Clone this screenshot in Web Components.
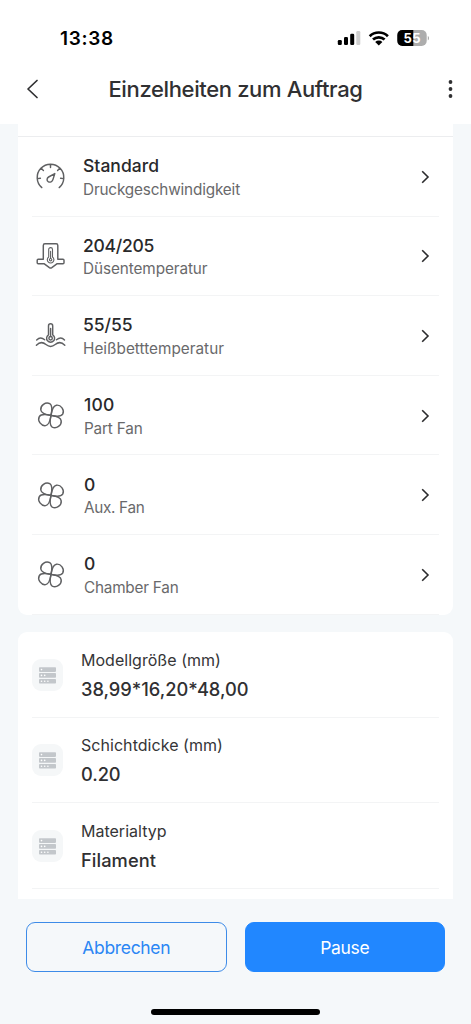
<!DOCTYPE html>
<html lang="de">
<head>
<meta charset="utf-8">
<title>Einzelheiten zum Auftrag</title>
<style>
html,body{margin:0;height:100%;overflow:hidden}
body{font-family:Inter,"Liberation Sans",sans-serif;background:#f5f8fa;color:#2d2d2f}
</style>
</head>
<body>
<job-screen></job-screen>
<script>
const define = (name, html, setup) => customElements.define(name, class extends HTMLElement {
  connectedCallback() {
    if (this.shadowRoot) return;
    this.attachShadow({mode: 'open'}).innerHTML = html;
    if (setup) setup(this, this.shadowRoot);
  }
});

/* A single line of text whose tracking adapts to the width given in "w". */
define('fit-line', `<style>:host{display:block;white-space:pre;line-height:1.2;font-feature-settings:"calt" 0}span{display:inline-block}</style><span><slot></slot></span>`, (el, root) => {
  const w = parseFloat(el.getAttribute('w'));
  if (!w) return;
  const span = root.querySelector('span');
  const gap = (w - span.getBoundingClientRect().width) / el.textContent.length;
  span.style.letterSpacing = gap.toFixed(3) + 'px';
});

const blade = 'M0 0C.8-3.6 1.8-9.8-1.2-11.7C-5.5-13.9-10.8-9.8-10.2-5.4C-9.5-1.2-3.6-.6 0 0Z';
const icons = {
  speed: `<path d="M6.8 27.6A13.3 13.3 0 1 1 24.2 27.6M15.5 4.3V7.6M6.1 8.1L8.4 10.4M24.9 8.1L22.6 10.4M2.3 18.6L5.4 18.3M28.7 18.6L25.6 18.3"/><path d="M19.8 13.6L18 19.4C17.4 21.6 15 22.8 13.2 21.7C11.5 20.6 11.8 18 13.6 17Z"/>`,
  nozzle: `<path d="M8.3 19.3V5.4Q8.3 3.8 9.9 3.8H21.2Q22.8 3.8 22.8 5.4V19.3H28Q29 19.3 29 20.3V22.7Q29 23.7 28 23.7H22.2L16.8 27.6Q15.6 28.4 14.4 27.6L9 23.7H3.2Q2.2 23.7 2.2 22.7V20.3Q2.2 19.3 3.2 19.3Z"/><path stroke-width="1.1" d="M13.7 17V9.5a1.9 1.9 0 0 1 3.8 0V17a3.3 3.3 0 1 1-3.8 0ZM15.6 11.2V18.4"/><circle stroke-width="1.1" cx="15.6" cy="19.7" r="1.2"/>`,
  bed: `<path d="M13.5 15.8V6.9a2.1 2.1 0 0 1 4.2 0V15.8a4 4 0 1 1-4.2 0ZM15.6 9.5V17.4"/><circle cx="15.6" cy="19.2" r="1.7"/><path d="M1.7 20.9C4.3 18.3 7.1 18.6 9.7 20.7M21.5 20.7C24.1 18.6 27 18.3 29.5 20.9M1.4 26.3C4.7 22.8 8 23 11 25.5C14 28 17.2 28 20.2 25.5C23.2 23 26.5 22.8 29.8 26.3"/>`,
  fan: `<g transform="translate(16 16.4)">${[0,90,180,270].map(a => `<path transform="rotate(${a})" d="${blade}"/>`).join('')}</g>`
};
define('line-icon', `<style>:host{display:block;width:32px;height:32px;flex:none}svg{display:block;fill:none;stroke:#5f6062;stroke-width:1.45;stroke-linecap:round;stroke-linejoin:round}</style><svg width="32" height="32"></svg>`,
  (el, root) => root.querySelector('svg').innerHTML = icons[el.getAttribute('name')]);

define('status-bar', `<style>
:host{display:flex;justify-content:space-between;align-items:center;height:28px;padding:24px 42px 0 60px;color:#000;font-size:19px;font-weight:600}
fit-line{margin-top:2px}svg{display:block}</style>
<fit-line w="54">13:38</fit-line>
<svg width="92" height="20" viewBox="0 0 92 20">
<rect y="12" x="0.8" width="4" height="5" rx="1.2"/><rect x="7" y="9" width="4" height="8" rx="1.2"/><rect x="13.2" y="5.7" width="4" height="11.3" rx="1.2"/><rect x="19.3" y="3" width="4" height="14" rx="1.2" fill="#cfcfcf"/>
<g fill="none" stroke="#000" stroke-width="2.7"><path d="M32.7 8.2A13 13 0 0 1 50.9 8.2M36 11.6A8.4 8.4 0 0 1 47.6 11.6"/></g><path d="M38.2 14A5.2 5.2 0 0 1 45.4 14L41.8 17.5Z"/>
<clipPath id="b"><rect x="60.3" y="2" width="29.4" height="16" rx="5"/></clipPath><g clip-path="url(#b)"><rect x="60" y="2" width="30" height="16" fill="#adadad"/><rect x="60" y="2" width="16.3" height="16"/></g>
<path d="M90.8 8v4.4q1.3-.6 1.3-2.2t-1.3-2.2" fill="#adadad"/>
<text x="75" y="14.7" text-anchor="middle" font-size="13" font-weight="700" textLength="17" fill="#fff">55</text></svg>`);

define('title-bar', `<style>
:host{display:grid;grid-template-columns:48px 1fr 48px;align-items:center;height:72px;color:#303032}
fit-line{justify-self:center;font-size:22px;font-weight:500;letter-spacing:-.36px;margin-top:3px}svg{display:block}</style>
<svg width="48" height="24"><path d="M37 4.5L28 13L37 21.5" fill="none" stroke="#2f2f31" stroke-width="1.7" stroke-linecap="round" stroke-linejoin="round"/></svg>
<fit-line><slot></slot></fit-line>
<svg width="48" height="24"><g fill="#303032"><circle cx="27.5" cy="6" r="1.9"/><circle cx="27.5" cy="13" r="1.9"/><circle cx="27.5" cy="20" r="1.9"/></g></svg>`);

define('setting-row', `<style>
:host{display:block;padding:0 14px}
.r{display:flex;align-items:center;box-sizing:border-box;height:79.6px;border-bottom:1px solid #f3f4f5;padding-left:3px}
.t{flex:1;margin-left:16px;padding-top:2.5px}:host([indent]) .t{margin-left:17px}.v{font-size:17.5px;font-weight:500;color:#29292b;margin-bottom:3.5px;line-height:21px}.l{font-size:15.3px;color:#69696b;line-height:20px}
.arrow{margin:1px 8px 0 0}</style>
<div class="r"><line-icon></line-icon><div class="t"><fit-line class="v"></fit-line><fit-line class="l"></fit-line></div>
<svg class="arrow" width="12" height="16"><path d="M3.2 2.2L9 8L3.2 13.8" fill="none" stroke="#2b2b2d" stroke-width="1.6"/></svg></div>`);

define('info-row', `<style>
:host{display:block;padding:0 14px}
.r{display:flex;align-items:center;box-sizing:border-box;height:85.6px;border-bottom:1px solid #f3f4f5}
.i{display:block;flex:none;margin-top:1px}.t{margin-left:18px;padding-top:2px}
.l{font-size:16px;color:#353537;line-height:20px}.v{font-size:18.3px;font-weight:500;color:#303032;margin-top:8px;line-height:23px}</style>
<div class="r"><svg class="i" width="31" height="32"><rect width="31" height="32" rx="9" fill="#f5f7f8"/><g fill="#c3c7cb"><rect x="7" y="8.3" width="17" height="4.6" rx=".8"/><rect x="7" y="14.1" width="17" height="4.6" rx=".8"/><rect x="7" y="19.9" width="17" height="4.6" rx=".8"/></g><g fill="#fff"><circle cx="9.5" cy="10.6" r=".8"/><circle cx="9.5" cy="16.4" r=".8"/><circle cx="12.7" cy="16.4" r=".8"/><circle cx="9.5" cy="22.2" r=".8"/><circle cx="12.7" cy="22.2" r=".8"/><circle cx="15.9" cy="22.2" r=".8"/></g></svg>
<div class="t"><fit-line class="l"></fit-line><fit-line class="v"></fit-line></div></div>`);

define('list-card', `<style>:host{display:block;background:#fff;margin:0 18px}</style><slot></slot>`);

define('action-button', `<style>
:host{display:flex;align-items:center;justify-content:center;flex:1;height:50px;box-sizing:border-box;border:1px solid #3d8be8;border-radius:9px;color:#2b86f4;font-size:17.5px}
:host([primary]){background:#2187ff;border-color:#2187ff;color:#fff}</style><slot></slot>`);

define('job-screen', `<style>
:host{display:flex;flex-direction:column;height:100vh;width:471px;background:#f5f8fa}
header{height:124px;background:#fff;flex:none}
main{height:774.5px;overflow:hidden;flex:none}
.a{border-radius:0 0 9px 9px;padding-top:12px}.top{height:1px;background:#ecedef}
.b{border-radius:9px 9px 0 0;margin-top:17.5px;height:280px}
.actions{display:flex;gap:18px;padding:23.5px 26px 0}
.home{width:169px;height:6px;border-radius:3px;background:#000;margin:36.5px auto 0}
</style>
<header><status-bar></status-bar><title-bar>Einzelheiten zum Auftrag</title-bar></header>
<main><list-card class="a"><div class="top"></div><div id="settings"></div></list-card><list-card class="b"></list-card></main>
<div class="actions"><action-button><fit-line w="88">Abbrechen</fit-line></action-button><action-button primary><fit-line w="49">Pause</fit-line></action-button></div>
<div class="home"></div>`, (el, root) => {
  const addRow = (host, tag, value, vw, label, lw, icon) => {
    const row = document.createElement(tag);
    if (icon === 'fan') row.setAttribute('indent', '');
    host.append(row);
    const r = row.shadowRoot;
    for (const [cls, text, w] of [['v', value, vw], ['l', label, lw]]) {
      const line = document.createElement('fit-line');
      line.className = cls; line.textContent = text; line.setAttribute('w', w);
      r.querySelector('.' + cls).replaceWith(line);
    }
    if (icon) {
      const i = document.createElement('line-icon');
      i.setAttribute('name', icon);
      r.querySelector('line-icon').replaceWith(i);
    }
  };
  const s = root.querySelector('#settings');
  addRow(s, 'setting-row', 'Standard', 76, 'Druckgeschwindigkeit', 157, 'speed');
  addRow(s, 'setting-row', '204/205', 71, 'Düsentemperatur', 124.5, 'nozzle');
  addRow(s, 'setting-row', '55/55', 49.5, 'Heißbetttemperatur', 141, 'bed');
  addRow(s, 'setting-row', '100', 30.5, 'Part Fan', 58.5, 'fan');
  addRow(s, 'setting-row', '0', 12, 'Aux. Fan', 60.5, 'fan');
  addRow(s, 'setting-row', '0', 12, 'Chamber Fan', 94.5, 'fan');
  const m = root.querySelector('.b');
  addRow(m, 'info-row', '38,99*16,20*48,00', 167.5, 'Modellgröße (mm)', 140, null);
  addRow(m, 'info-row', '0.20', 39.5, 'Schichtdicke (mm)', 142, null);
  addRow(m, 'info-row', 'Filament', 75, 'Materialtyp', 85.5, null);
});
</script>
</body>
</html>
